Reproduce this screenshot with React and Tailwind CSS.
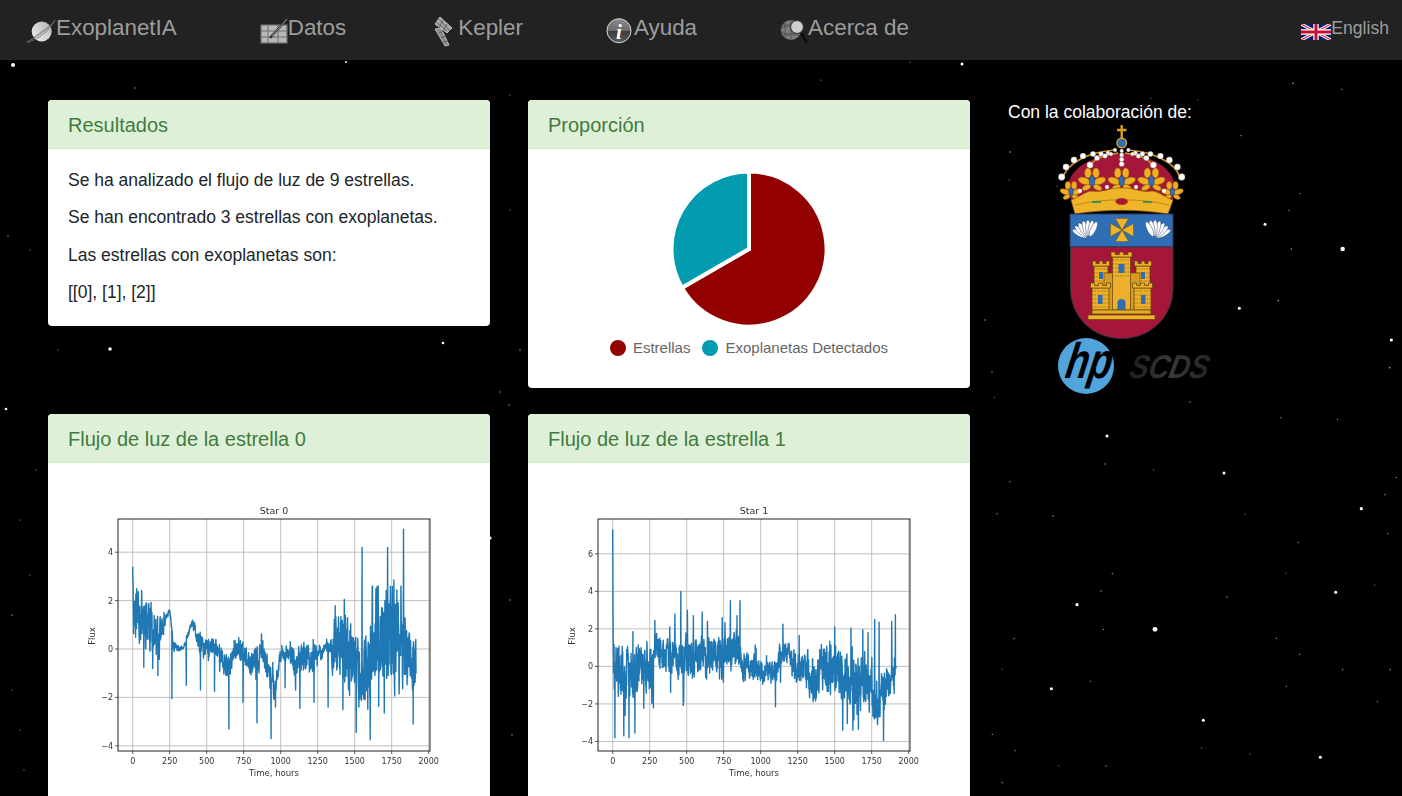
const font = { fontFamily: '"Liberation Sans", Arial, sans-serif' };

// star field, read off the reference in zoom-crop coordinates
const zoneA = [[73,4,.5],[660,18,.7],[933,65,.6],[1102,71,.6],[411,120,1.5],[406,204,.7],[551,222,.6],[762,231,1.5],[120,257,.7],[1279,244,.7],[1245,296,.7],[81,353,.7],[249,360,.7],[825,354,.6],[1174,338,1.6],[1253,412,.6],[985,439,.7],[427,533,.7],[948,531,.6],[393,585,.7],[1214,567,.6],[771,603,.7],[1097,589,1.5],[321,626,1.6],[400,700,.7],[555,700,2.4],[132,728,.7],[920,727,.7],[988,775,.7],[96,819,.6],[1118,821,.7],[1261,821,.7],[362,856,.6],[244,878,1.5],[949,871,.7],[1222,917,.6],[700,973,1.5],[67,1015,.7],[135,1064,.6],[695,1056,.6],[840,1074,.6],[1051,1084,1.5],[266,1110,.6],[408,1110,.7],[97,1160,.7]];
const zoneB = [[273,70,.8],[419,88,.6],[117,227,.7],[294,400,.7],[261,451,.7],[189,493,1.5],[268,567,.7],[422,567,2.2],[229,722,.8],[112,745,1.5],[568,840,1.6],[563,923,.8]];
const zoneC = [[13,65,2],[346,62,1],[135,88,.7],[158,118,.6],[345,114,.7],[392,125,.6],[462,131,1.6],[821,80,.6],[910,62,.6],[962,64,1.5],[6,409,1.3],[110,349,1.8],[58,350,.6],[30,250,.6],[8,236,.7],[20,520,.6],[490,538,1.6],[12,615,.7],[30,575,.6],[20,730,.6],[24,770,.6],[510,600,.7],[500,392,.7],[510,210,.6],[509,405,.7],[443,343,1.3],[510,95,.6],[1010,152,.8],[1009,180,.6],[1057,186,.6],[1151,98,.5],[1198,100,.5],[985,320,.8],[992,372,.7],[520,350,.7],[36,470,.6],[12,690,.6],[512,735,.7]];
const stars = [
  ...zoneA.map(([x, y, r]) => [970 + x / 3, 396 + y / 3, r]),
  ...zoneB.map(([x, y, r]) => [1202 + x / 3, 60 + y / 3, r]),
  ...zoneC,
];

const Starfield = () => (
  <svg className="absolute inset-0" width="1402" height="796" viewBox="0 0 1402 796">
    {stars.map(([x, y, r], i) => (
      <circle key={i} cx={x} cy={y} r={r} fill="#fff" opacity={r < 1 ? 0.65 : 1} />
    ))}
  </svg>
);

const Planet = () => (
  <svg width="31" height="32" viewBox="25 15 31 32" className="mt-[2px] shrink-0">
    <defs>
      <linearGradient id="pl" x1="0" y1="1" x2="1" y2="0">
        <stop offset="0" stopColor="#f2f2f2" />
        <stop offset="1" stopColor="#b4b4b4" />
      </linearGradient>
    </defs>
    <circle cx="41.7" cy="31.5" r="10" fill="url(#pl)" />
    <path d="M27 42 C32 40 50 28 55 20" fill="none" stroke="#777" strokeWidth="1" />
    <path d="M27 42 C30 44 50 32 55 20" fill="none" stroke="#666" strokeWidth=".8" />
    <path d="M34 37 L49 26" stroke="#888" strokeWidth=".7" />
  </svg>
);

const TableIcon = () => (
  <svg width="28" height="32" viewBox="260 15 28 32" className="mt-[2px] shrink-0">
    <rect x="261" y="25" width="26" height="18" fill="#b8b8b8" stroke="#6e6e6e" strokeWidth="1.2" />
    <path d="M261 31h26M261 37h26M268 25v18M278 25v18" stroke="#6e6e6e" strokeWidth="1" />
    <path d="M270 38 L287 19" stroke="#2a2a2a" strokeWidth="2.2" />
    <path d="M272 36 L287 19" stroke="#cfcfcf" strokeWidth=".7" />
  </svg>
);

const Satellite = () => (
  <svg width="26" height="32" viewBox="433 15 26 32" className="mt-[2px] shrink-0">
    <path d="M441 17 L453 28 L448 33 L436 24 Z" fill="#a6a6a6" stroke="#e0e0e0" strokeWidth=".7" />
    <path d="M436 29 L442 28 L450 45 L446 46 Z" fill="#8b8b8b" stroke="#dcdcdc" strokeWidth=".7" />
    <path d="M440 19 L451 31M437 22 L448 31M444 20 L440 28M448 24 L444 31M440 33 L445 31M442 38 L447 36M444 42 L449 41" stroke="#444" strokeWidth=".7" />
  </svg>
);

const InfoIcon = () => (
  <svg width="28" height="32" viewBox="607 15 28 32" className="mt-[2px] shrink-0">
    <defs>
      <linearGradient id="inf" x1="0" y1="0" x2="0" y2="1">
        <stop offset="0" stopColor="#8c8c8c" />
        <stop offset=".5" stopColor="#6a6a6a" />
        <stop offset=".52" stopColor="#3c3c3c" />
        <stop offset="1" stopColor="#5c5c5c" />
      </linearGradient>
    </defs>
    <circle cx="620" cy="30.7" r="12" fill="url(#inf)" stroke="#d8d8d8" strokeWidth="1" />
    <text x="620" y="38.5" textAnchor="middle" fill="#fff" fontSize="21" fontWeight="700" fontStyle="italic" fontFamily='"Liberation Serif", serif'>i</text>
  </svg>
);

const GlobeSearch = () => (
  <svg width="28" height="32" viewBox="781 15 28 32" className="mt-[2px] shrink-0">
    <circle cx="792" cy="30" r="10" fill="#7c7c7c" />
    <ellipse cx="792" cy="30" rx="11" ry="4" fill="none" stroke="#4c4c4c" strokeWidth=".8" />
    <path d="M782 25h20M782 35h20M792 20v20M786 21v18" stroke="#4c4c4c" strokeWidth=".7" />
    <path d="M802 33 L808 43" stroke="#0c0c0c" strokeWidth="2.8" />
    <circle cx="798" cy="27" r="6.5" fill="#cfcfcf" stroke="#333" strokeWidth="1.2" />
  </svg>
);

const UkFlag = () => (
  <svg width="30" height="16" viewBox="0 0 30 16" className="block">
    <rect width="30" height="16" fill="#012169" />
    <path d="M0 0 L30 16 M30 0 L0 16" stroke="#fff" strokeWidth="3.2" />
    <path d="M0 0 L30 16 M30 0 L0 16" stroke="#c8102e" strokeWidth="1.1" />
    <path d="M15 0v16M0 8h30" stroke="#fff" strokeWidth="5.4" />
    <path d="M15 0v16M0 8h30" stroke="#c8102e" strokeWidth="3" />
  </svg>
);

const Panel = ({ title, children }) => (
  <section className="overflow-hidden rounded-[4px] bg-white">
    <h3 className="h-[49px] border-b border-[#d6e9c6] bg-[#dff0d8] px-5 pt-[11px] text-[20px] leading-[28px] text-[#3f7c40]">
      {title}
    </h3>
    {children}
  </section>
);

const Pie = () => (
  <svg width="160" height="160" viewBox="669 168.5 160 160" className="mx-auto block">
    <path d="M749 248.5 L749 171 A77.5 77.5 0 1 1 681.9 287.25 Z" fill="#930000" stroke="#fff" strokeWidth="4" />
    <path d="M749 248.5 L681.9 287.25 A77.5 77.5 0 0 1 749 171 Z" fill="#029bb0" stroke="#fff" strokeWidth="4" />
  </svg>
);

const interp = (env, t) => {
  for (let i = 1; i < env.length; i++) {
    if (t <= env[i][0]) {
      const [t0, m0, a0] = env[i - 1];
      const [t1, m1, a1] = env[i];
      const k = (t - t0) / (t1 - t0);
      return [m0 + (m1 - m0) * k, a0 + (a1 - a0) * k];
    }
  }
  return env[env.length - 1].slice(1);
};

const DT = 1.5;

const makeSeries = (env, spikes, seed) => {
  let s = seed;
  const rnd = () => {
    s = (s * 1664525 + 1013904223) % 4294967296;
    return s / 4294967296;
  };
  const pts = [];
  let prev = 0;
  for (let t = 0; t <= 1915; t += DT) {
    const [m, a] = interp(env, t);
    prev = prev * 0.3 + (rnd() * 2 - 1) * 1.3;
    // a few outliers so the band is jagged rather than even
    const kick = rnd() < 0.05 ? (rnd() * 2 - 1) * a * 2.4 : 0;
    const v = m + prev * a + kick;
    pts.push([t, t < 6 ? v : Math.max(-3.4, Math.min(2.6, v))]);
  }
  spikes.forEach(([st, v]) => {
    pts[Math.round(st / DT)] = [st, v];
  });
  return pts;
};

const star0 = makeSeries(
  [[0,3.4,0],[6,1.7,.8],[100,1.3,.9],[160,.3,.7],[200,.5,.5],[215,1.2,.1],[250,1.6,.05],[262,1,.1],[270,.1,.3],[290,.1,.1],[340,0,.05],[400,1.05,.1],[420,.8,.2],[450,.1,.3],[520,0,.3],[560,.2,.3],[620,-.7,.35],[660,-.6,.3],[710,.2,.3],[780,-.6,.35],[840,-.4,.4],[880,-.2,.35],[960,-1.7,.3],[1000,-.2,.2],[1060,-.1,.2],[1100,-.8,.5],[1160,-.3,.4],[1230,-.4,.4],[1300,.1,.1],[1340,.1,.3],[1360,-.2,1.1],[1450,-.2,1],[1560,-1,1.1],[1600,-1.3,1.2],[1620,.4,1.3],[1800,.5,1.6],[1850,-.2,.9],[1915,-.5,1]],
  [[75,-.75],[170,-1.1],[265,-2.05],[362,-1.5],[458,-1.7],[553,-1.75],[650,-3.3],[745,-2.2],[840,-3.05],[935,-3.7],[965,-2.4],[1030,-1.6],[1130,-2.45],[1225,-2.2],[1320,-2.4],[1420,-2.5],[1430,2.05],[1510,-3.45],[1550,4.2],[1605,-3.75],[1700,-2.65],[1722,4.2],[1830,4.95],[1765,2.85],[1895,-3.1]],
  11,
);

const star1 = makeSeries(
  [[0,7,0],[4,0,.7],[10,-.3,1],[130,-.4,1.1],[270,0,.7],[280,.2,.5],[290,1.3,.6],[340,.6,.55],[500,.4,.8],[620,.5,.8],[700,.8,.7],[850,.9,.7],[880,0,.5],[1000,-.3,.45],[1080,-.5,.45],[1150,.8,.45],[1190,.7,.35],[1220,-.2,.6],[1300,0,.5],[1340,-.7,1],[1450,-.2,1.1],[1550,-.5,1],[1650,-1,1],[1780,-1.7,1],[1840,-1,.65],[1915,-.6,.5]],
  [[0,7.3],[15,-3.8],[75,-3.7],[110,-3.8],[150,-3.55],[275,-2.2],[285,2.45],[385,2.1],[420,2.8],[460,4],[505,3],[545,2.7],[605,2.9],[640,2.4],[795,3.5],[740,2.6],[860,3.5],[840,2.7],[1100,-2.15],[1150,2.25],[1260,1.65],[1500,2.1],[1585,-3.05],[1610,2.05],[1630,-2.85],[1660,-3.35],[1690,1.95],[1725,1.8],[1770,2.5],[1800,2.35],[1830,-3.95],[1885,2.4],[1910,2.75]],
  29,
);

const tickText = { fontFamily: '"DejaVu Sans", sans-serif', fill: '#333' };

const FluxChart = ({ title, data, zero, scale, yTicks }) => {
  const px = (t) => 62.7 + 0.148 * t;
  const py = (v) => zero - scale * v;
  return (
    <svg width="380" height="290" viewBox="0 0 380 290" className="block blur-[0.3px]">
      {[0, 250, 500, 750, 1000, 1250, 1500, 1750, 2000].map((t) => (
        <g key={t}>
          <line x1={px(t)} x2={px(t)} y1="24" y2="256" stroke="#b0b0b0" strokeWidth=".8" />
          <line x1={px(t)} x2={px(t)} y1="256" y2="259" stroke="#333" strokeWidth=".8" />
          <text x={px(t)} y="269" textAnchor="middle" fontSize="8" style={tickText}>{t}</text>
        </g>
      ))}
      {yTicks.map((v) => (
        <g key={v}>
          <line x1="48" x2="360" y1={py(v)} y2={py(v)} stroke="#b0b0b0" strokeWidth=".8" />
          <line x1="45" x2="48" y1={py(v)} y2={py(v)} stroke="#333" strokeWidth=".8" />
          <text x="43" y={py(v) + 3} textAnchor="end" fontSize="8" style={tickText}>{v < 0 ? `−${-v}` : v}</text>
        </g>
      ))}
      <polyline
        points={data.map(([t, v]) => `${px(t).toFixed(1)},${py(v).toFixed(1)}`).join(' ')}
        fill="none"
        stroke="#1f77b4"
        strokeWidth="1.4"
        strokeLinejoin="round"
      />
      <rect x="48" y="24" width="312" height="232" fill="none" stroke="#222" strokeWidth="1" />
      <text x="204" y="19" textAnchor="middle" fontSize="9.5" style={tickText}>{title}</text>
      <text x="204" y="281" textAnchor="middle" fontSize="8.5" style={tickText}>Time, hours</text>
      <text transform="translate(24.5 141) rotate(-90)" textAnchor="middle" fontSize="8.5" style={tickText}>Flux</text>
    </svg>
  );
};

const Shell = ({ x, y, flip }) => (
  <g transform={`translate(${x} ${y}) scale(${flip ? -1 : 1} 1) rotate(-18)`}>
    {[-44, -30, -15, 0, 15, 30, 44].map((a) => (
      <ellipse key={a} cx="0" cy="-1.5" rx="2.6" ry="8" transform={`translate(0 9) rotate(${a}) translate(0 -9)`} fill="#fff" stroke="#24406e" strokeWidth=".45" />
    ))}
  </g>
);

const Tower = ({ x, y, w, h }) => {
  const m = (w + 3) / 5;
  return (
    <g stroke="#5e400c" strokeWidth=".7" fill="#eeb02a">
      <rect x={x} y={y} width={w} height={h} />
      <path d={`M${x - 1.5} ${y} v-5 h${m} v2.5 h${m} v-2.5 h${m} v2.5 h${m} v-2.5 h${m} v5 z`} />
      <path d={`M${x} ${y + 3}h${w}M${x} ${y + 7}h${w}M${x} ${y + 11}h${w}M${x} ${y + 15}h${w}M${x} ${y + 19}h${w}`} strokeWidth=".5" strokeDasharray="1.5 1" />
    </g>
  );
};

const Fleuron = ({ x, y, s = 1 }) => (
  <g transform={`translate(${x} ${y}) scale(${s})`} fill="#f0ae22" stroke="#8a5a10" strokeWidth=".5">
    <ellipse cx="-7.5" cy="1" rx="6.5" ry="3.4" transform="rotate(20 -7.5 1)" />
    <ellipse cx="7.5" cy="1" rx="6.5" ry="3.4" transform="rotate(-20 7.5 1)" />
    <ellipse cx="-4" cy="-7" rx="3.4" ry="5" />
    <ellipse cx="4" cy="-7" rx="3.4" ry="5" />
    <ellipse cx="-5.5" cy="7.5" rx="4.6" ry="2.6" transform="rotate(-25 -5.5 7.5)" />
    <ellipse cx="5.5" cy="7.5" rx="4.6" ry="2.6" transform="rotate(25 5.5 7.5)" />
    <ellipse cx="0" cy="1" rx="2.8" ry="5" fill="#2f6db5" stroke="#1d3f6e" />
  </g>
);

const pearlsLeft = [[3.7,52,3.4],[8,42,3.2],[16,35,3.2],[25,31,3.1],[35,29,2.8],[43,29,2.5],[50,28,2.2],[57,25,2],[32,40,3.2],[39,33,2.8],[47,31,2.4],[53,29,2]];
const pearlsMid = [[63.7,26,2],[63.7,30,2.2],[63.7,34.5,2.4],[63.7,39,2.6]];

const Crest = () => (
  <svg width="128" height="214" viewBox="0 0 128 214" className="ml-[50px] mt-[1px] block shrink-0">
    <path d="M9 64 C12 40 38 30 63.7 28 C90 30 115 40 118 64 L112 82 L16 82 Z" fill="#a5173a" />
    <path d="M5 52 C10 38 30 27 57 25 M122 52 C117 38 97 27 70 25" fill="none" stroke="#d79a1c" strokeWidth="1.6" />
    <path d="M32 42 C35 33 48 30 60 28 M95 42 C92 33 79 30 67 28" fill="none" stroke="#d79a1c" strokeWidth="1.4" />
    <path d="M63.7 0 V14 M59 5 H68.5" stroke="#d9a021" strokeWidth="2.4" />
    <circle cx="63.7" cy="18" r="4.8" fill="#2f6db5" stroke="#d9a021" strokeWidth="1.4" />
    {pearlsLeft.flatMap(([x, y, r]) => [[x, y, r], [127.4 - x, y, r]]).concat(pearlsMid).map(([x, y, r], i) => (
      <circle key={i} cx={x} cy={y} r={r} fill="#fff" stroke="#3a2a10" strokeWidth=".3" />
    ))}
    <Fleuron x={34} y={55} />
    <Fleuron x={63.7} y={55} />
    <Fleuron x={93.4} y={55} />
    <Fleuron x={13} y={66} s={.8} />
    <Fleuron x={114.4} y={66} s={.8} />
    <path d="M13 75 C22 72 28 66 34 66 C44 68 54 62 63.7 63 C74 62 84 68 94 66 C100 66 106 72 115 75 L110 89 C80 84 47 84 17 89 Z" fill="#f0b429" stroke="#8a5a10" strokeWidth=".7" />
    <path d="M17 80 C46 73 82 73 111 80" fill="none" stroke="#8a5a10" strokeWidth=".5" />
    <path d="M34 77h9" stroke="#1d8a5a" strokeWidth="1.6" />
    <path d="M85 77h9" stroke="#1d8a5a" strokeWidth="1.6" />
    <ellipse cx="63.7" cy="76.5" rx="6" ry="3.2" fill="#b5123a" stroke="#8a5a10" strokeWidth=".7" />
    <circle cx="22" cy="66" r="2" fill="#fff" />
    <circle cx="106" cy="66" r="2" fill="#fff" />
    <circle cx="49" cy="62" r="2" fill="#fff" />
    <circle cx="78" cy="62" r="2" fill="#fff" />
    <path d="M12 89 H115 V122 H12 Z" fill="#2f6db5" stroke="#2a3a55" strokeWidth="1" />
    <path d="M12.5 122 H115 V163 C115 192 92 213.5 63.7 213.5 C35 213.5 12.5 192 12.5 163 Z" fill="#a5173a" stroke="#3a3340" strokeWidth="1" />
    <Shell x={28} y={105} />
    <Shell x={99} y={105} flip />
    <path d="M64 105 L57.5 93.5 H70.5 Z M64 105 L57.5 116.5 H70.5 Z M64 105 L52.5 98.5 V111.5 Z M64 105 L75.5 98.5 V111.5 Z" fill="#f0b429" stroke="#7a5a18" strokeWidth=".6" />
    <Tower x={36} y={141} w={14} h={22} />
    <Tower x={78} y={141} w={14} h={22} />
    <rect x="46" y="148" width="36" height="38" fill="#d59c22" stroke="#5e400c" strokeWidth=".6" />
    <Tower x={54.5} y={132} w={18} h={53} />
    <Tower x={34} y={163} w={17} h={22} />
    <Tower x={76} y={163} w={17} h={22} />
    <rect x="60.5" y="139" width="6" height="9" fill="#2f6db5" />
    <rect x="41" y="147" width="4" height="7" fill="#2f6db5" />
    <rect x="83" y="147" width="4" height="7" fill="#2f6db5" />
    <rect x="40" y="170" width="4.5" height="9" fill="#2f6db5" />
    <rect x="83" y="170" width="4.5" height="9" fill="#2f6db5" />
    <path d="M59.5 185 V177 C59.5 173 67.5 173 67.5 177 V185 Z" fill="#2f6db5" />
    <path d="M34 185 H93 V189 H34 Z" fill="#e3ac28" stroke="#5e400c" strokeWidth=".7" />
    <path d="M30 190 H97 V194.5 H30 Z" fill="#f0b429" stroke="#5e400c" strokeWidth=".7" />
  </svg>
);

const Logos = () => (
  <svg width="160" height="60" viewBox="1056 336 160 60" className="-mt-[3px] ml-[48px] block shrink-0">
    <defs>
      <linearGradient id="scds" x1="0" y1="0" x2="1" y2="0">
        <stop offset="0" stopColor="#1c1c1c" />
        <stop offset=".5" stopColor="#3a3a3a" />
        <stop offset="1" stopColor="#242424" />
      </linearGradient>
    </defs>
    <circle cx="1086" cy="366" r="28" fill="#52a4dc" />
    <g transform="translate(1087 378) skewX(-10) scale(.75 1)">
      <text textAnchor="middle" fontSize="50" fontStyle="italic" fontWeight="700" fill="#000" fontFamily='"Liberation Sans", sans-serif'>hp</text>
    </g>
    <g transform="translate(1128 378) skewX(-12) scale(.86 1)">
      <text fontSize="33" fontStyle="italic" fontWeight="700" fill="url(#scds)" fontFamily='"Liberation Sans", sans-serif'>SCDS</text>
    </g>
  </svg>
);

const navItems = [
  { icon: <TableIcon />, label: 'Datos', cls: 'ml-[83px]' },
  { icon: <Satellite />, label: 'Kepler', cls: 'ml-[86px]' },
  { icon: <InfoIcon />, label: 'Ayuda', cls: 'ml-[83px]' },
  { icon: <GlobeSearch />, label: 'Acerca de', cls: 'ml-[83px]' },
];

const App = () => (
  <div className="relative h-[796px] overflow-hidden bg-black" style={font}>
    <Starfield />
    <nav className="relative flex h-[60px] items-center bg-[#222] pl-[25px] pr-[13px] text-[#9d9d9d]">
      <div className="flex items-center">
        <Planet />
        <span className="pb-[5px] text-[22.4px]">ExoplanetIA</span>
      </div>
      {navItems.map((item) => (
        <div key={item.label} className={`flex items-center ${item.cls}`}>
          {item.icon}
          <span className="pb-[5px] text-[22.4px]">{item.label}</span>
        </div>
      ))}
      <div className="ml-auto flex items-center">
        <span className="mt-[5px]"><UkFlag /></span>
        <span className="pb-[4px] text-[17.6px]">English</span>
      </div>
    </nav>

    <main className="relative grid grid-cols-[442px_442px_1fr] items-start gap-x-[38px] gap-y-[26px] px-[48px] pt-[40px]">
      <Panel title="Resultados">
        <div className="flex flex-col gap-[11.7px] px-5 pb-[20px] pt-[19px] text-[17.5px] leading-[25.7px] text-[#212529]">
          <p>Se ha analizado el flujo de luz de 9 estrellas.</p>
          <p>Se han encontrado 3 estrellas con exoplanetas.</p>
          <p>Las estrellas con exoplanetas son:</p>
          <p>[[0], [1], [2]]</p>
        </div>
      </Panel>

      <Panel title="Proporción">
        <div className="h-[239px] pt-[20px]">
          <Pie />
          <div className="mt-[11px] flex items-center justify-center text-[15px] leading-[16px] text-[#666]">
            <span className="h-4 w-4 rounded-full bg-[#930000]" />
            <span className="ml-[7px]">Estrellas</span>
            <span className="ml-[12px] h-4 w-4 rounded-full bg-[#029bb0]" />
            <span className="ml-[7px]">Exoplanetas Detectados</span>
          </div>
        </div>
      </Panel>

      <div className="flex h-[288px] flex-col">
        <p className="text-[17.5px] leading-[24px] text-white">Con la colaboración de:</p>
        <Crest />
        <Logos />
      </div>

      <Panel title="Flujo de luz de la estrella 0">
        <div className="pb-10 pl-[22px] pt-[32px]">
          <FluxChart title="Star 0" data={star0} zero={154} scale={24.2} yTicks={[-4, -2, 0, 2, 4]} />
        </div>
      </Panel>

      <Panel title="Flujo de luz de la estrella 1">
        <div className="pb-10 pl-[22px] pt-[32px]">
          <FluxChart title="Star 1" data={star1} zero={171.4} scale={18.76} yTicks={[-4, -2, 0, 2, 4, 6]} />
        </div>
      </Panel>
    </main>
  </div>
);

export default App;
